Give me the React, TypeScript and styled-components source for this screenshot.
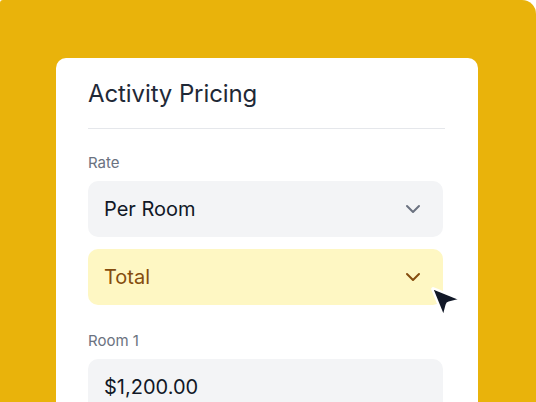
import React from "react";
import styled, { createGlobalStyle } from "styled-components";
import { ChevronDown } from "lucide-react";

const GlobalStyle = createGlobalStyle`
  html, body {
    margin: 0;
    padding: 0;
    background: #ffffff;
  }
  * {
    box-sizing: border-box;
  }
`;

const Backdrop = styled.div`
  width: 536px;
  height: 402px;
  overflow: hidden;
  background: #e9b30b;
  border-radius: 3px 14px 0 0;
  padding: 58px 58px 0 56px;
  font-family: Inter, "Noto Sans", sans-serif;
`;

const Card = styled.div`
  position: relative;
  background: #ffffff;
  border-radius: 10px;
  padding: 20px 35px 40px 32px;
  min-height: 400px;
`;

const Title = styled.h1`
  margin: 0;
  font-size: 24px;
  line-height: 32px;
  font-weight: 400;
  color: #1f2937;
  letter-spacing: -0.1px;
`;

const Divider = styled.hr`
  margin: 18px -2px 0 0;
  border: 0;
  height: 1px;
  background: #e5e7eb;
`;

const Field = styled.div<{ $gap: number }>`
  display: flex;
  flex-direction: column;
  margin-top: ${(p) => p.$gap}px;
`;

const Label = styled.div`
  font-size: 15px;
  line-height: 20px;
  color: #6b7280;
  margin-bottom: 8px;
`;

const Select = styled.div<{ $active?: boolean }>`
  display: flex;
  align-items: center;
  justify-content: space-between;
  height: 56px;
  padding: 0 18px 0 16px;
  border-radius: 10px;
  background: ${(p) => (p.$active ? "#fef7c3" : "#f3f4f6")};
  color: ${(p) => (p.$active ? "#854d0e" : "#111827")};
  font-size: 20px;
  & + & {
    margin-top: 12px;
  }
  svg {
    color: ${(p) => (p.$active ? "#854d0e" : "#6b7280")};
  }
`;

const Input = styled.div`
  display: flex;
  align-items: center;
  height: 56px;
  padding: 0 16px;
  border-radius: 10px;
  background: #f3f4f6;
  color: #111827;
  font-size: 20px;
`;

const Cursor = styled.svg`
  position: absolute;
  left: 370px;
  top: 224px;
  width: 38px;
  height: 38px;
`;

export default function App() {
  return (
    <>
      <GlobalStyle />
      <Backdrop>
        <Card>
          <Title>Activity Pricing</Title>
          <Divider />
          <Field $gap={24}>
            <Label>Rate</Label>
            <Select>
              <span>Per Room</span>
              <ChevronDown size={24} strokeWidth={2} />
            </Select>
            <Select $active>
              <span>Total</span>
              <ChevronDown size={24} strokeWidth={2} />
            </Select>
          </Field>
          <Field $gap={26}>
            <Label>Room 1</Label>
            <Input>$1,200.00</Input>
          </Field>
          <Cursor viewBox="0 0 24 24">
            <path
              d="M4.037 4.688a.495.495 0 0 1 .651-.651l16 6.5a.5.5 0 0 1-.063.947l-6.124 1.58a2 2 0 0 0-1.438 1.435l-1.579 6.126a.5.5 0 0 1-.947.063z"
              fill="#111827"
              stroke="#ffffff"
              strokeWidth={1.5}
              strokeLinejoin="round"
            />
          </Cursor>
        </Card>
      </Backdrop>
    </>
  );
}
